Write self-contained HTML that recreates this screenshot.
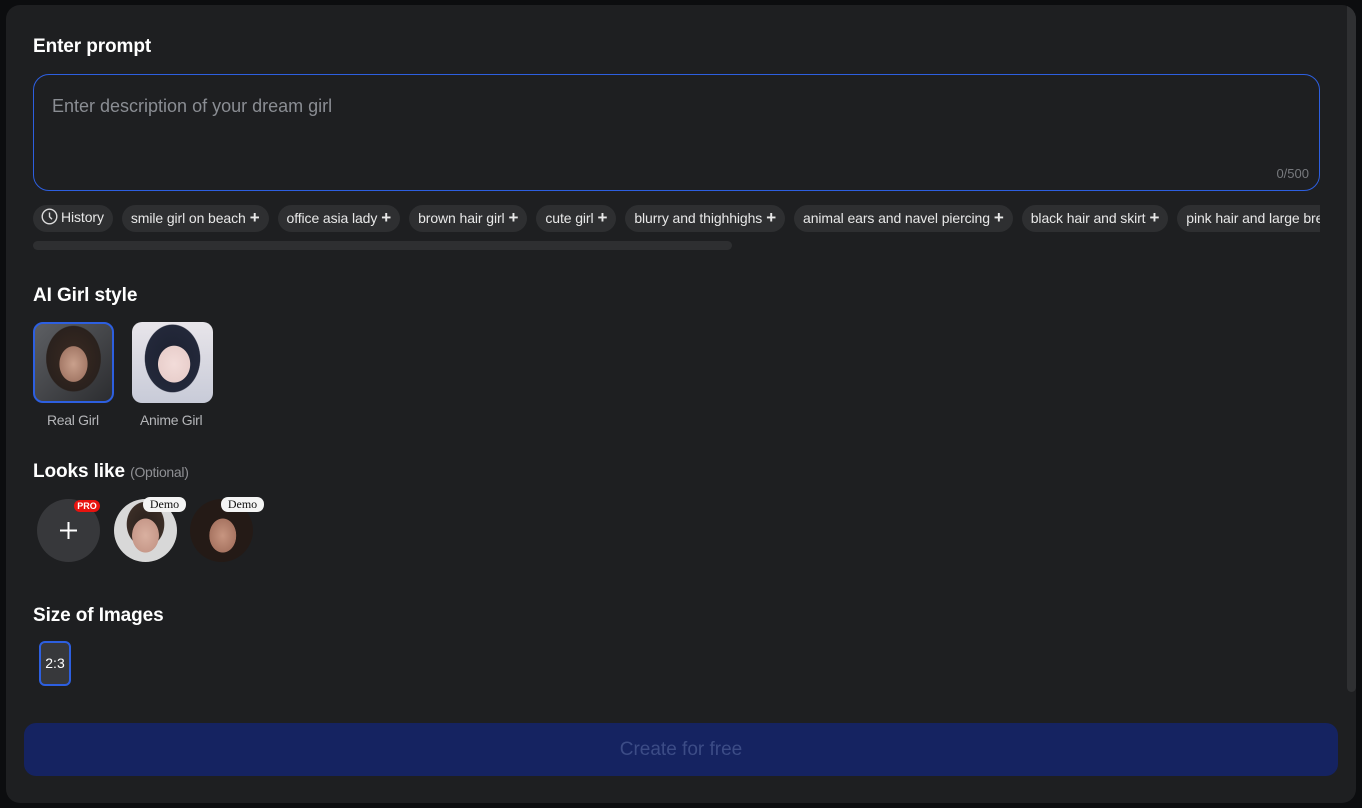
<!DOCTYPE html>
<html><head><meta charset="utf-8"><style>
*{box-sizing:border-box;margin:0;padding:0}
body{width:1362px;height:808px;background:#0c0d0f;font-family:"Liberation Sans",Arial,sans-serif;position:relative;overflow:hidden}
.panel{position:absolute;left:6px;top:5px;width:1350px;height:798px;background:#1e1f21;border-radius:14px;overflow:hidden}
.sb{position:absolute;left:1341px;top:0;width:9px;height:687px;background:#2f3032;border-radius:0 0 5px 5px}
.h{position:absolute;left:27px;color:#fff;font-weight:bold;font-size:19px;letter-spacing:-0.1px}
.ta{position:absolute;left:27px;top:69px;width:1287px;height:117px;border:1px solid #2d5fe0;border-radius:16px}
.ta .ph{position:absolute;left:18px;top:21px;color:#8a8d93;font-size:18px}
.ta .cnt{position:absolute;right:10px;bottom:9px;color:#77797d;font-size:13px}
.chips{position:absolute;left:27px;top:200px;width:1287px;height:27px;overflow:hidden;white-space:nowrap;font-size:0}
.chip{display:inline-block;height:27px;line-height:25px;background:#2e2f31;border-radius:14px;color:#e8e8e8;font-size:14px;letter-spacing:-0.1px;padding:0 9px;margin-right:9px;vertical-align:top}
.chip b{font-weight:bold;font-size:17px;margin-left:4px}
.track{position:absolute;left:27px;top:236px;width:699px;height:9px;background:#2e2f31;border-radius:5px}
.st{position:absolute;top:317px;width:81px;height:81px;border-radius:10px;overflow:hidden}
.lbl{position:absolute;top:407px;color:#b4b5b8;font-size:14px;letter-spacing:-0.3px}
.circ{position:absolute;top:494px;width:63px;height:63px;border-radius:50%;overflow:hidden}
.demo{position:absolute;top:492px;width:43px;height:15px;background:#f4f4f4;border-radius:7px;font-family:"Liberation Serif",serif;font-size:12px;line-height:15px;text-align:center;color:#111}
.btn{position:absolute;left:18px;top:718px;width:1314px;height:53px;background:#152361;border-radius:12px;color:#3c4c86;font-size:19px;text-align:center;line-height:53px}
</style></head><body>
<div class="panel">
<div class="sb"></div>
<div class="h" style="top:31px">Enter prompt</div>
<div class="ta"><div class="ph">Enter description of your dream girl</div><div class="cnt">0/500</div></div>
<div class="chips">
<span class="chip" style="padding-left:8px"><svg width="17" height="17" viewBox="0 0 17 17" style="vertical-align:-3px;margin-right:3px"><circle cx="8.5" cy="8.5" r="7.3" fill="none" stroke="#ddd" stroke-width="1.4"/><path d="M8.5 4.5V8.7L11 11.2" fill="none" stroke="#ddd" stroke-width="1.4"/></svg>History</span><span class="chip">smile girl on beach<b>+</b></span><span class="chip">office asia lady<b>+</b></span><span class="chip">brown hair girl<b>+</b></span><span class="chip">cute girl<b>+</b></span><span class="chip">blurry and thighhighs<b>+</b></span><span class="chip">animal ears and navel piercing<b>+</b></span><span class="chip">black hair and skirt<b>+</b></span><span class="chip">pink hair and large breasts<b>+</b></span>
</div>
<div class="track"></div>
<div class="h" style="top:280px">AI Girl style</div>
<div class="st" style="left:27px;border:2px solid #2d5fe0;background:radial-gradient(ellipse 30% 38% at 50% 52%,#c9a08c 0,#a57a68 60%,transparent 62%),radial-gradient(ellipse 50% 60% at 50% 45%,#3a2a22 0,#2a211d 70%,transparent 72%),linear-gradient(135deg,#5d5f63,#2c2d30)"></div>
<div class="st" style="left:126px;background:radial-gradient(ellipse 28% 32% at 52% 52%,#f2dcd9 0,#e9cfcc 70%,transparent 72%),radial-gradient(ellipse 45% 55% at 50% 45%,#1c2130 0,#23283a 75%,transparent 77%),linear-gradient(180deg,#e8e5ea,#c8cbd8)"></div>
<div class="lbl" style="left:41px">Real Girl</div>
<div class="lbl" style="left:134px">Anime Girl</div>
<div class="h" style="top:456px">Looks like <span style="font-weight:normal;font-size:14px;color:#8f9094;letter-spacing:-0.3px">(Optional)</span></div>
<div class="circ" style="left:31px;background:#37383b"><svg width="63" height="63"><path d="M31.5 23v17M23 31.5h17" stroke="#fff" stroke-width="2"/></svg></div>
<div style="position:absolute;left:68px;top:495px;width:26px;height:12px;background:#e8130f;border-radius:6px;color:#fff;font-size:9px;font-weight:bold;line-height:12px;text-align:center">PRO</div>
<div class="circ" style="left:108px;background:radial-gradient(ellipse 30% 38% at 50% 58%,#d9b0a0 0,#c7998a 70%,transparent 72%),radial-gradient(ellipse 42% 50% at 50% 40%,#2a211d 0,#3a2d26 70%,transparent 72%),#d8d8d8"></div>
<div class="demo" style="left:137px">Demo</div>
<div class="circ" style="left:184px;background:radial-gradient(ellipse 30% 38% at 52% 58%,#c79580 0,#a87562 70%,transparent 72%),#241a16"></div>
<div class="demo" style="left:215px">Demo</div>
<div class="h" style="top:600px">Size of Images</div>
<div style="position:absolute;left:33px;top:636px;width:32px;height:45px;border:2px solid #2d5fe0;border-radius:6px;background:#37383b;color:#fff;font-size:14px;text-align:center;line-height:41px">2:3</div>
<div class="btn">Create for free</div>
</div>
</body></html>
